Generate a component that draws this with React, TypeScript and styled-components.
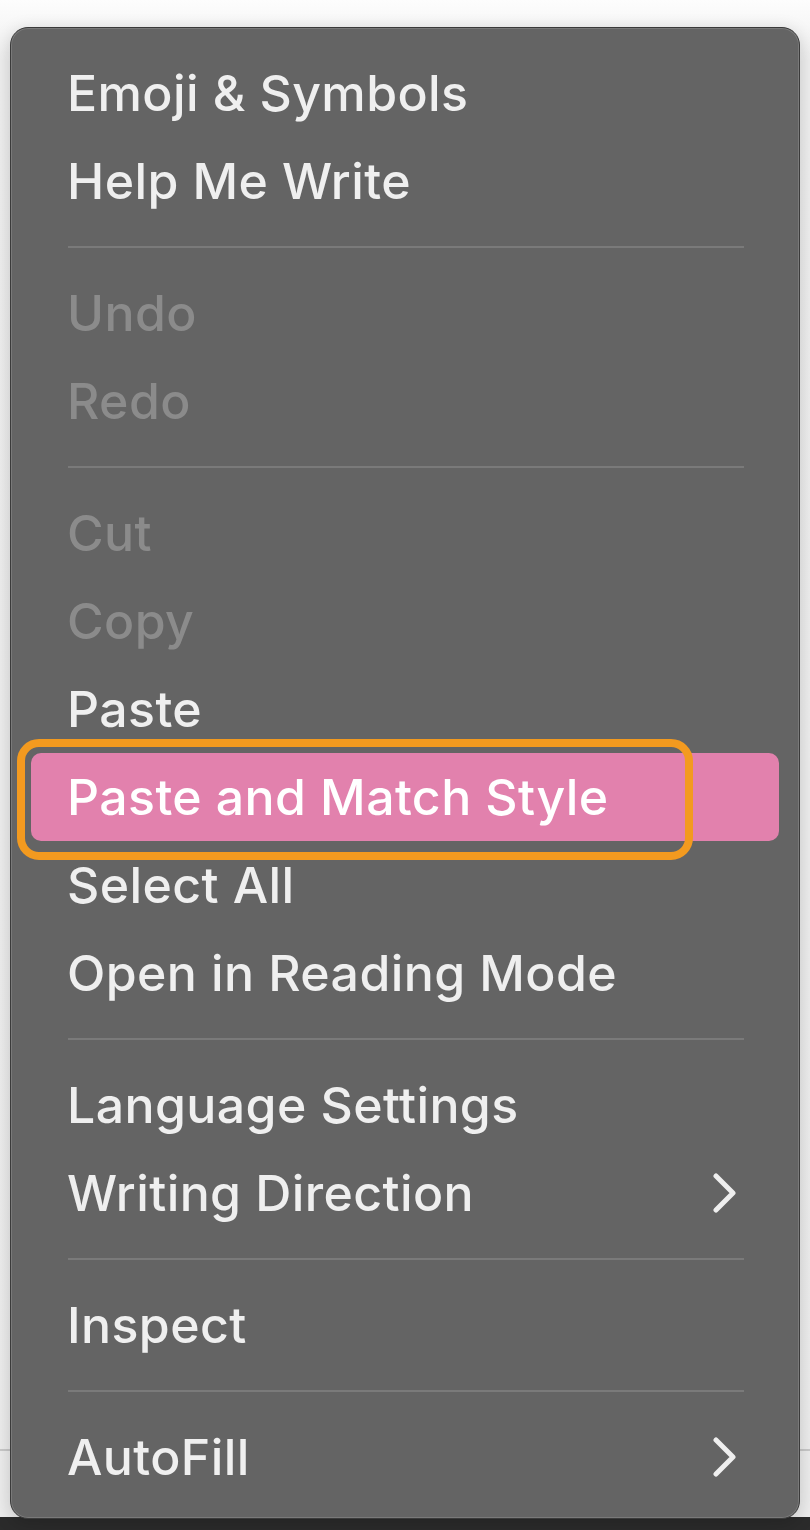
import React from 'react';
import styled, { createGlobalStyle } from 'styled-components';

const GlobalStyle = createGlobalStyle`
    html, body {
        margin: 0;
        padding: 0;
    }
    body {
        font-family: Inter, "Liberation Sans", sans-serif;
        -webkit-font-smoothing: antialiased;
    }
`;

const Page = styled.div`
    position: relative;
    width: 810px;
    height: 1530px;
    box-sizing: border-box;
    padding: 27px 10px 0 10px;
    overflow: hidden;
    background:
        linear-gradient(to bottom, transparent 1449px, #c9c9c9 1449px, #c9c9c9 1451px, transparent 1451px),
        linear-gradient(to bottom, transparent 1517px, #2b2b2b 1517px),
        linear-gradient(to bottom, #fdfdfd 0px, #efefef 60px, #ededed 100%);
`;

const Menu = styled.div`
    position: relative;
    width: 790px;
    box-sizing: border-box;
    padding: 21px 20px 17px 20px;
    background-color: #646464;
    border: 1px solid #3b3b3b;
    border-radius: 18px;
    box-shadow:
        inset 0 0 0 1px rgba(255, 255, 255, 0.14),
        0 4px 18px rgba(0, 0, 0, 0.18);
`;

const Row = styled.div<{ $disabled?: boolean; $active?: boolean }>`
    position: relative;
    display: flex;
    align-items: center;
    justify-content: space-between;
    height: 88px;
    padding: 0 41px 0 36px;
    border-radius: 10px;
    font-size: 50px;
    font-weight: 500;
    letter-spacing: 0.4px;
    color: ${p => (p.$disabled ? '#8b8b8b' : p.$active ? '#ffffff' : '#efefef')};
    background-color: ${p => (p.$active ? '#e281ad' : 'transparent')};
`;

const Callout = styled.div`
    position: absolute;
    left: -14px;
    top: -14px;
    width: 676px;
    height: 121px;
    box-sizing: border-box;
    border: 8px solid #f39a1f;
    border-radius: 22px;
    pointer-events: none;
`;

const Separator = styled.div`
    display: flex;
    align-items: center;
    height: 44px;
    padding: 0 35px 0 37px;

    &::before {
        content: '';
        flex: 1;
        height: 2px;
        background-color: #7a7a7a;
    }
`;

const Chevron = () => (
    <svg width="26" height="40" viewBox="0 0 26 40">
        <polyline
            points="4,3 21,20 4,37"
            fill="none"
            stroke="#efefef"
            strokeWidth="5"
            strokeLinecap="round"
            strokeLinejoin="round"
        />
    </svg>
);

type Item =
    | { kind: 'sep' }
    | { kind: 'item'; label: string; disabled?: boolean; active?: boolean; submenu?: boolean };

const items: Item[] = [
    { kind: 'item', label: 'Emoji & Symbols' },
    { kind: 'item', label: 'Help Me Write' },
    { kind: 'sep' },
    { kind: 'item', label: 'Undo', disabled: true },
    { kind: 'item', label: 'Redo', disabled: true },
    { kind: 'sep' },
    { kind: 'item', label: 'Cut', disabled: true },
    { kind: 'item', label: 'Copy', disabled: true },
    { kind: 'item', label: 'Paste' },
    { kind: 'item', label: 'Paste and Match Style', active: true },
    { kind: 'item', label: 'Select All' },
    { kind: 'item', label: 'Open in Reading Mode' },
    { kind: 'sep' },
    { kind: 'item', label: 'Language Settings' },
    { kind: 'item', label: 'Writing Direction', submenu: true },
    { kind: 'sep' },
    { kind: 'item', label: 'Inspect' },
    { kind: 'sep' },
    { kind: 'item', label: 'AutoFill', submenu: true },
];

const App: React.FC = () => {
    return (
        <>
            <GlobalStyle />
            <Page>
                <Menu>
                    {items.map((item, i) =>
                        item.kind === 'sep' ? (
                            <Separator key={i} />
                        ) : (
                            <Row key={i} $disabled={item.disabled} $active={item.active}>
                                <span>{item.label}</span>
                                {item.submenu && <Chevron />}
                                {item.active && <Callout />}
                            </Row>
                        )
                    )}
                </Menu>
            </Page>
        </>
    );
};

export default App;
